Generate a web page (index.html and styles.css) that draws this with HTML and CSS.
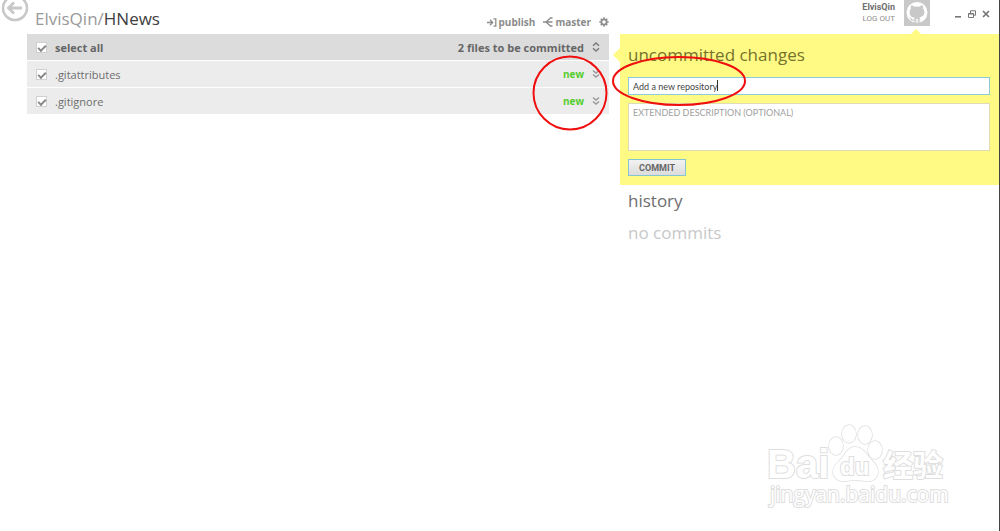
FILE: index.html
```html
<!DOCTYPE html>
<html lang="en">
<head>
<meta charset="utf-8">
<title>ElvisQin/HNews</title>
<link rel="stylesheet" href="styles.css">
</head>
<body>
<div class="window">
  <main class="repo">
    <header class="repo-header">
      <button class="back" type="button" aria-label="Back">
        <svg width="28" height="22" viewBox="0 0 28 22" fill="none" stroke="#c8c8c8"><circle cx="14" cy="8" r="12" stroke-width="2.6"/><path d="M21 8H8M13 2.500 7.500 8l5.500 5.500" stroke-width="2.800"/></svg>
      </button>
      <h1 class="title"><span class="owner">ElvisQin/</span>HNews</h1>
      <nav class="tools">
        <button class="tool" type="button">
          <svg width="10" height="9" viewBox="0 0 10 9" fill="none" stroke="#8c8c8c" stroke-width="1.300"><path d="M0 4.500h5.500M3 1.800l2.700 2.700L3 7.200M6.500.8h2.300v7.400H6.500"/></svg>publish
        </button>
        <button class="tool" type="button">
          <svg width="10" height="10" viewBox="0 0 10 10" fill="none" stroke="#8c8c8c" stroke-width="1.300"><path d="M0 5h9.500M9.500 1H7.500L3 5l4.500 4h2"/></svg>master
        </button>
        <button class="tool" type="button" aria-label="Settings">
          <svg width="10" height="10" viewBox="0 0 10 10" fill="none" stroke="#8c8c8c"><circle cx="5" cy="5" r="2.700" stroke-width="1.800"/><path d="M5 .3v1.600M5 8.100v1.600M.3 5h1.600M8.100 5h1.600M1.700 1.700l1.100 1.100M7.200 7.200l1.100 1.100M1.700 8.300l1.100-1.100M7.200 2.800l1.100-1.100" stroke-width="1.500"/></svg>
        </button>
      </nav>
    </header>
    <section class="files">
      <div class="row row-all">
        <label class="pick"><input class="check" type="checkbox" checked>select all</label>
        <span>2 files to be committed</span>
        <button class="toggle" type="button" aria-label="Expand all"><svg width="8" height="10" viewBox="0 0 8 10" fill="none" stroke="#777" stroke-width="1.400"><path d="M1 3.700 4 1l3 2.700M1 6.300 4 9l3-2.700"/></svg></button>
      </div>
      <div class="row">
        <label class="pick"><input class="check" type="checkbox" checked>.gitattributes</label>
        <span class="new">new</span>
        <button class="toggle" type="button" aria-label="Show .gitattributes"><svg width="8" height="10" viewBox="0 0 8 10" fill="none" stroke="#999" stroke-width="1.500"><path d="M1 1.500 4 4l3-2.500M1 5.500 4 8l3-2.500"/></svg></button>
      </div>
      <div class="row">
        <label class="pick"><input class="check" type="checkbox" checked>.gitignore</label>
        <span class="new">new</span>
        <button class="toggle" type="button" aria-label="Show .gitignore"><svg width="8" height="10" viewBox="0 0 8 10" fill="none" stroke="#999" stroke-width="1.500"><path d="M1 1.500 4 4l3-2.500M1 5.500 4 8l3-2.500"/></svg></button>
      </div>
      <svg class="mark mark-status" width="76" height="76" viewBox="0 0 76 76" fill="none" stroke="#f00f0f" stroke-width="2"><circle cx="38" cy="38" r="36.500"/></svg>
    </section>
  </main>

  <aside class="side">
    <header class="account">
      <div class="user"><strong>ElvisQin</strong><a class="logout" href="#logout">LOG OUT</a></div>
      <svg class="avatar" width="26" height="26" viewBox="0 0 26 26" role="img" aria-label="ElvisQin"><path fill="#c8c8c8" d="M0 0h26v26H0z"/><circle cx="13" cy="12.500" r="10.500" fill="#fff"/><path fill="#c8c8c8" d="M7.200 5.300c1.300.1 2.500.7 3.400 1.500a11 11 0 0 1 4.800 0c.9-.8 2.100-1.400 3.400-1.500.5 1.100.5 2.200.2 3.100 1 1.100 1.400 2.200 1.400 3.700 0 3.500-2 4.900-5 5.300.6.600.8 1.300.8 2.200v3.200l-.8.300v-3.500c0-.5-.2-.8-.5-1v4.600h-1.200v-4.500h-1.300v4.500h-1.200v-4.600c-.3.200-.5.500-.5 1v3.500l-.8-.3v-2.100c-2 .3-2.800-.4-3.300-1.500-.3-.7-.7-1.200-1.200-1.500.9-.3 1.700.2 2.200 1 .5.900 1.200 1.200 2.300.9.100-.8.300-1.400.7-1.800-3-.4-5-1.900-5-5.700 0-1.500.5-2.600 1.400-3.700-.3-.9-.3-2 .2-3.100z"/></svg>
      <div class="controls">
        <button type="button" aria-label="Minimize"><svg width="8" height="9" viewBox="0 0 8 9"><path d="M1 7h6v1.600H1z" fill="#777"/></svg></button>
        <button type="button" aria-label="Restore"><svg width="8" height="8" viewBox="0 0 8 8" fill="none" stroke="#777"><path d="M2.500 3V.8h5v4.400H6M.5 3.500h5v4h-5zM.5 4h5"/></svg></button>
        <button type="button" aria-label="Close"><svg width="8" height="8" viewBox="0 0 8 8" stroke="#777" stroke-width="1.700"><path d="m1 1 6 6M7 1 1 7"/></svg></button>
      </div>
    </header>
    <form class="commit">
      <h2 class="heading">uncommitted changes</h2>
      <div class="field">
        <input class="summary" type="text" aria-label="Summary" value="Add a new repository">
        <span class="caret"></span>
      </div>
      <textarea class="description" aria-label="Extended description" placeholder="EXTENDED DESCRIPTION (OPTIONAL)"></textarea>
      <button class="submit" type="button">COMMIT</button>
      <svg class="mark mark-summary" width="134" height="50" viewBox="0 0 134 50" fill="none" stroke="#f00f0f" stroke-width="2"><ellipse cx="67" cy="25" rx="66" ry="24"/></svg>
    </form>
    <section class="history">
      <h2 class="heading">history</h2>
      <p class="empty">no commits</p>
    </section>
  </aside>

  <svg class="watermark" width="184" height="92" viewBox="0 0 184 92" fill="#fff" stroke="#dedede" stroke-width="2" role="img" aria-label="Baidu">
    <text class="brand" x="1" y="58">Bai</text>
    <g stroke-width="1.500"><ellipse cx="70" cy="26" rx="7" ry="9"/><ellipse cx="83" cy="14" rx="7" ry="9"/><ellipse cx="99" cy="15" rx="7" ry="9"/><ellipse cx="109" cy="30" rx="7" ry="9"/>
    <path d="M89 27c7 0 11 6 14 10 4 5 10 9 9 16-1 6-6 9-12 8-8-1-13-1-21 0-6 1-12-3-12-9 0-6 5-10 9-14 4-5 6-11 13-11z"/></g>
    <text class="du" x="74" y="55">du</text>
    <text class="cjk" x="117" y="56">经验</text>
    <text class="site" x="4" y="82">jingyan.baidu.com</text>
  </svg>
</div>
</body>
</html>
```
FILE: styles.css
```css
* { box-sizing: border-box; }
body {
  margin: 0;
  background: #fff;
  color: #6e6e6e;
  font-family: "Open Sans", "Noto Sans", "Noto Sans CJK SC", sans-serif;
  font-size: 11px;
}
button {
  padding: 0;
  border: 0;
  background: none;
  color: inherit;
  font: inherit;
}
svg { display: block; }
h1, h2, p { margin: 0; font-weight: 400; }

.window {
  position: relative;
  display: grid;
  grid-template-columns: minmax(0, 1fr) 379px;
  column-gap: 11px;
  min-height: 100vh;
  border-right: 1px solid #444;
}
.repo-header {
  display: flex;
  height: 34px;
  padding-left: 1px;
}
.back { align-self: flex-start; }
.title {
  margin-left: 6px;
  padding-top: 7px;
  color: #404040;
  font-size: 17px;
  line-height: 24px;
}
.owner { color: #999; }
.tools {
  display: flex;
  align-items: center;
  gap: 8px;
  height: 16px;
  margin: 14px 0 0 auto;
}
.tool {
  display: flex;
  align-items: center;
  gap: 2px;
  color: #8c8c8c;
  font-size: 10px;
  font-weight: 700;
  line-height: 16px;
}
.files {
  position: relative;
  display: grid;
  gap: 1px;
  margin-left: 27px;
}
.row {
  display: flex;
  align-items: center;
  height: 26px;
  padding: 0 9px;
  background: #ececec;
}
.row-all {
  background: #dcdcdc;
  color: #666;
  font-weight: 700;
}
.pick {
  display: flex;
  align-items: center;
  gap: 8px;
  margin-right: auto;
}
.check {
  appearance: none;
  display: grid;
  place-items: center;
  width: 11px;
  height: 11px;
  margin: 0;
  border: 1px solid #d0d0d0;
  background: #fff;
}
.check:checked::before {
  content: "";
  width: 6px;
  height: 3px;
  border: solid #888;
  border-width: 0 0 2px 2px;
  transform: rotate(-45deg);
}
.toggle { margin-left: 8px; }
.new {
  color: #55cc2c;
  font-size: 10px;
  font-weight: 700;
}
.mark {
  position: absolute;
  pointer-events: none;
}
.mark-status { top: 21px; right: 1px; }

.account {
  display: flex;
  align-items: flex-start;
  justify-content: flex-end;
  height: 34px;
  padding-right: 9px;
}
.user {
  display: grid;
  padding-top: 2px;
  color: #6e6e6e;
  font-family: Roboto, "Open Sans", sans-serif;
  font-size: 9px;
  line-height: 11px;
  text-align: right;
}
.logout {
  color: #8c8c8c;
  font-size: 8px;
  text-decoration: none;
}
.avatar { margin-left: 9px; }
.controls {
  display: flex;
  gap: 6px;
  margin: 9px 0 0 24px;
}
.commit {
  position: relative;
  display: flex;
  flex-direction: column;
  align-items: stretch;
  padding: 9px 9px 9px 8px;
  background: #fffa84;
}
.commit::before {
  content: "";
  position: absolute;
  top: 14px;
  left: -7px;
  border: solid transparent;
  border-width: 7px 7px 7px 0;
  border-right-color: #fffa84;
}
.commit::after {
  content: "";
  position: absolute;
  top: -5px;
  right: 78px;
  border: solid transparent;
  border-width: 0 5px 5px;
  border-bottom-color: #fffa84;
}
.heading {
  font-size: 17px;
  line-height: 24px;
}
.commit .heading { color: #75722c; }
.field {
  position: relative;
  margin-top: 10px;
}
.summary {
  display: block;
  width: 100%;
  height: 18px;
  padding: 0 4px;
  border: 1px solid #8ccbd8;
  outline: 0;
  background: #fff;
  color: #444;
  font-family: Lato, "Open Sans", sans-serif;
  font-size: 9px;
}
.caret {
  position: absolute;
  top: 3px;
  left: 89px;
  width: 1px;
  height: 11px;
  background: #333;
}
.description {
  display: block;
  height: 48px;
  margin-top: 8px;
  padding: 3px 4px;
  border: 1px solid #dedbb5;
  outline: 0;
  resize: none;
  background: #fff;
  font-family: Lato, "Open Sans", sans-serif;
  font-size: 9px;
  line-height: 11px;
}
.description::placeholder { color: #a0a0a0; }
.submit {
  align-self: flex-start;
  width: 58px;
  height: 17px;
  margin-top: 8px;
  border: 1px solid #87c4d2;
  background: linear-gradient(#f2f2f2, #dcdcdc);
  color: #666;
  font-family: Roboto, "Open Sans", sans-serif;
  font-size: 9px;
  font-weight: 700;
}
.mark-summary { top: 22px; left: -8px; }
.history { padding: 4px 8px; }
.empty {
  margin-top: 8px;
  color: #c8c8c8;
  font-size: 17px;
  line-height: 24px;
}
.watermark {
  position: absolute;
  right: 49px;
  bottom: 19px;
  paint-order: stroke;
}
.brand {
  font-family: "Liberation Sans", sans-serif;
  font-size: 40px;
  font-weight: 700;
}
.du {
  font-family: "Liberation Sans", sans-serif;
  font-size: 24px;
  font-weight: 700;
}
.cjk {
  font-family: "Noto Sans CJK SC", sans-serif;
  font-size: 30px;
  font-weight: 700;
}
.site {
  font-family: "Open Sans", sans-serif;
  font-size: 21px;
}
```
